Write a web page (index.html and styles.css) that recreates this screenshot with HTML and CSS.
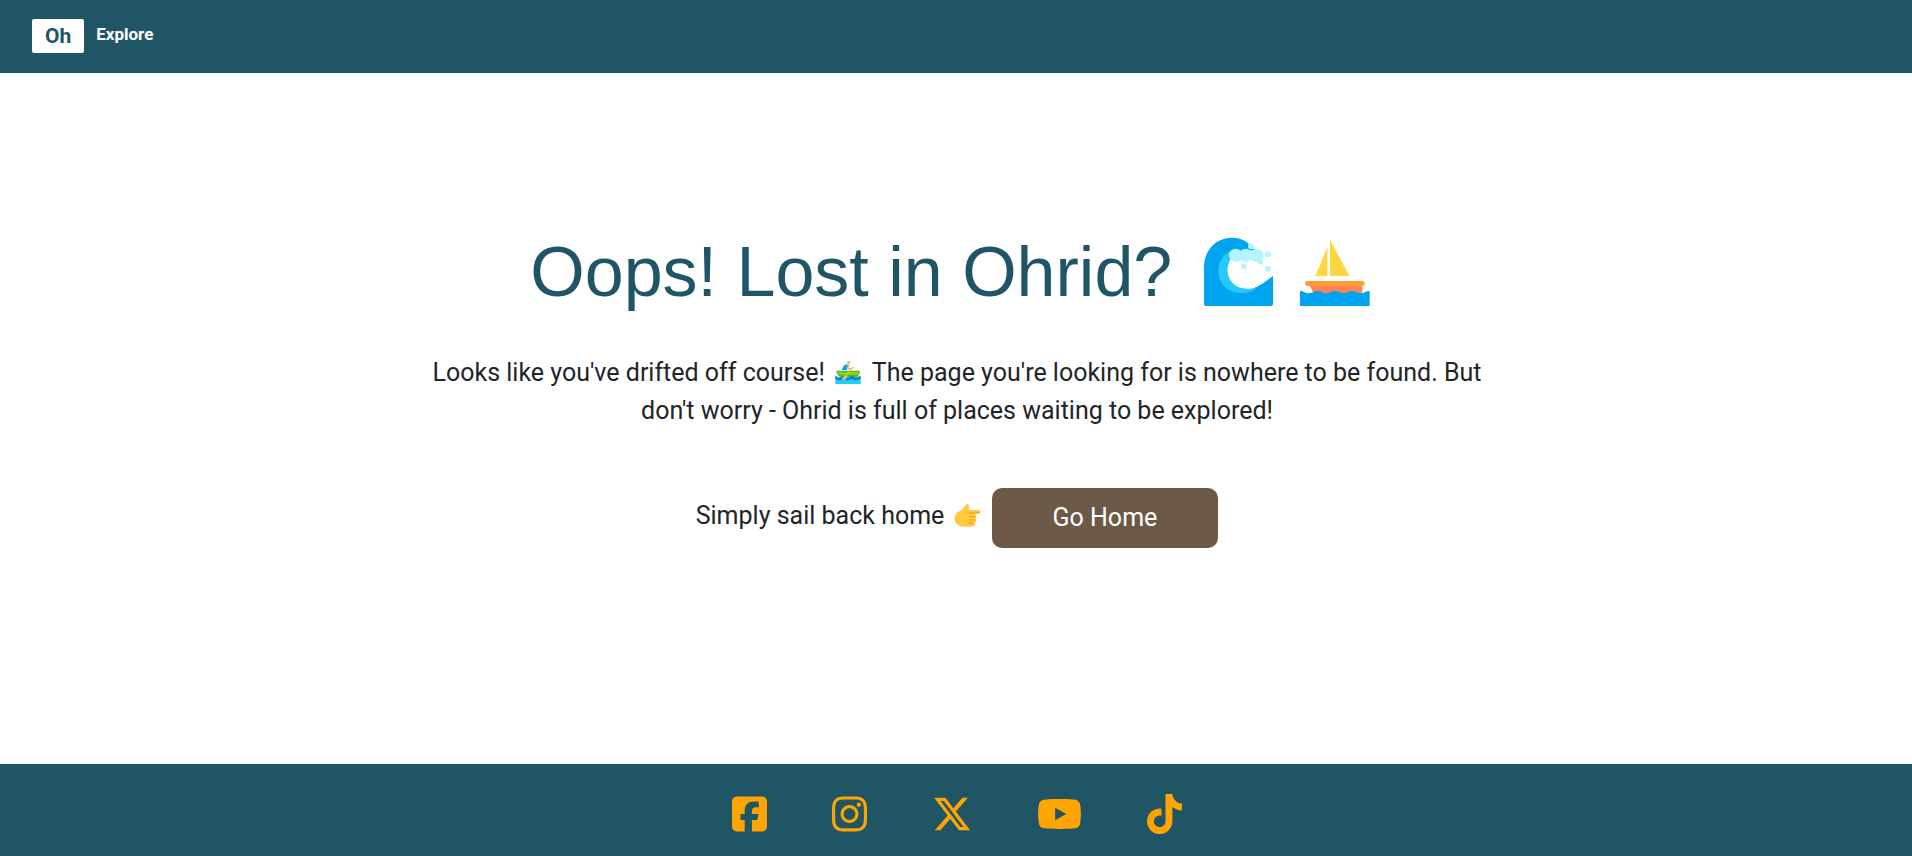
FILE: index.html
```html
<!DOCTYPE html>
<html lang="en">
<head>
<meta charset="utf-8">
<meta name="viewport" content="width=device-width, initial-scale=1">
<title>Oh Explore</title>
<link rel="stylesheet" href="styles.css">
</head>
<body>
<header class="header">
  <a class="brand" href="#"><span class="brand-badge">Oh</span><span class="brand-name">Explore</span></a>
</header>
<main class="main">
  <h1 class="title">Oops! Lost in Ohrid? <svg class="emoji-large" viewBox="39 48 288 216" role="img" aria-label="Wave">
      <path fill="#00a4ef" d="M75 252V143C75 88 112 53 160 53c28 0 48 12 66 36l-60 10c-25 8-40 28-40 56 0 35 25 58 62 58 40 0 60-26 94-46v85q0 6-6 6H81q-6 0-6-6z"/>
      <path fill="#26c9fc" d="M160 91c-26 9-42 32-42 61 0 39 30 67 69 67 24 0 40-9 54-19-14 5-24 6-37 6-35 0-58-24-58-55 0-11 3-22 9-31z"/>
      <path fill="#fff" d="M155 118c-6 9-9 20-9 32 0 32 24 55 57 55 36 0 53-18 79-38v-50z"/>
      <g fill="#b3f5ff"><circle cx="170" cy="106" r="20"/><circle cx="200" cy="106" r="20"/><circle cx="233" cy="106" r="20"/><path d="M170 93h63v27h-63z"/><circle cx="216" cy="79" r="9"/><circle cx="267" cy="103" r="9"/><circle cx="245" cy="125" r="8"/><circle cx="194" cy="140" r="9"/><circle cx="267" cy="146" r="9"/></g>
    </svg><svg class="emoji-large" viewBox="327 48 288 216" role="img" aria-label="Sailboat">
      <path fill="#ffd63e" d="M453 59l58 109h-58zM445 82v86h-36z"/>
      <path fill="#ff8257" d="M390 192h160v34H407z"/>
      <rect x="378" y="183" width="179" height="15" rx="7" fill="#ff9d2e"/>
      <path fill="#00a4ef" d="M363 213c13 0 14 7 25 7s17-7 28-7 16 7 27 7 14-7 25-7 16 7 26 7 15-7 26-7 16 7 26 7 14-7 26-7v45H363z"/>
    </svg></h1>
  <p class="message">Looks like you've drifted off course! <svg class="emoji" viewBox="35 30 105 75" role="img" aria-label="Rowboat">
      <path fill="#26c9fc" d="M48 82h76v20H48z"/>
      <path fill="#59b914" d="M51 62h71c-2 12-7 20-14 20H67c-8 0-14-8-16-20z"/>
      <path fill="#86d72f" d="M55 67h63l-3 7H59z"/>
      <path fill="#0084ce" d="M48 78c6 0 6 5 12 5s8-5 13-5 7 5 12 5 7-5 12-5 8 5 13 5 7-5 14-5v9c-7 0-8 4-14 4s-8-4-13-4-7 4-12 4-7-4-12-4-8 4-13 4-6-4-12-4z"/>
      <path fill="#00a4ef" d="M79 43l10 3-7 14H67c2-7 6-13 12-17z"/>
      <path d="M83 50l8 8 11-5" fill="none" stroke="#ffb04a" stroke-width="4" stroke-linecap="round"/>
      <circle cx="88" cy="38" r="5" fill="#ffb633"/>
      <path d="M79 79l18-23" fill="none" stroke="#e8c078" stroke-width="3"/>
      <path fill="#e8c078" d="M78 75l7 5-7 8-10 1 3-7z"/>
    </svg> The page you're looking for is nowhere to be found. But don't worry - Ohrid is full of places waiting to be explored!</p>
  <div class="home-row">
    <p class="home-text">Simply sail back home <svg class="emoji" viewBox="35 30 105 75" role="img" aria-label="Pointing right">
      <path fill="#ffc83d" d="M75 41l5-6q7-5 10 3l-3 13h32q5 1 5 5 0 5-5 5h-14q7 3 4 9 5 4 0 10 4 4-1 8-1 12-10 13H77C58 101 46 92 46 77c0-14 8-20 16-24 6-3 9-7 13-12z"/>
      <path d="M89 60h31M93 71h14M91 81h14M89 90h11" fill="none" stroke="#e39d19" stroke-width="3" stroke-linecap="round"/>
    </svg></p>
    <button class="home-button" type="button">Go Home</button>
  </div>
</main>
<footer class="footer">
  <a class="social" href="#" aria-label="Facebook"><svg viewBox="0 0 448 512"><path d="M64 32C28.7 32 0 60.7 0 96V416c0 35.3 28.7 64 64 64h98.2V334.2H109.4V256h52.8V222.3c0-87.1 39.4-127.5 125-127.5c16.2 0 44.2 3.2 55.7 6.4V172c-6-.6-16.5-1-29.6-1c-42 0-58.2 15.9-58.2 57.2V256h83.6l-14.4 78.2H255V480H384c35.3 0 64-28.7 64-64V96c0-35.3-28.7-64-64-64H64z"/></svg></a>
  <a class="social" href="#" aria-label="Instagram"><svg viewBox="0 0 448 512"><path d="M224.1 141c-63.6 0-114.9 51.3-114.9 114.9s51.3 114.9 114.9 114.9S339 319.5 339 255.9 287.7 141 224.1 141zm0 189.6c-41.1 0-74.7-33.5-74.7-74.7s33.5-74.7 74.7-74.7 74.7 33.5 74.7 74.7-33.6 74.7-74.7 74.7zm146.4-194.3c0 14.9-12 26.8-26.8 26.8-14.9 0-26.8-12-26.8-26.8s12-26.8 26.8-26.8 26.8 12 26.8 26.8zm76.1 27.2c-1.7-35.9-9.9-67.7-36.2-93.9-26.2-26.2-58-34.4-93.9-36.2-37-2.1-147.9-2.1-184.9 0-35.8 1.7-67.6 9.9-93.9 36.1s-34.4 58-36.2 93.9c-2.1 37-2.1 147.9 0 184.9 1.7 35.9 9.9 67.7 36.2 93.9s58 34.4 93.9 36.2c37 2.1 147.9 2.1 184.9 0 35.9-1.7 67.7-9.9 93.9-36.2 26.2-26.2 34.4-58 36.2-93.9 2.1-37 2.1-147.8 0-184.8zM398.8 388c-7.8 19.6-22.9 34.7-42.6 42.6-29.5 11.7-99.5 9-132.1 9s-102.7 2.6-132.1-9c-19.6-7.8-34.7-22.9-42.6-42.6-11.7-29.5-9-99.5-9-132.1s-2.6-102.7 9-132.1c7.8-19.6 22.9-34.7 42.6-42.6 29.5-11.7 99.5-9 132.1-9s102.7-2.6 132.1 9c19.6 7.8 34.7 22.9 42.6 42.6 11.7 29.5 9 99.5 9 132.1s2.7 102.7-9 132.1z"/></svg></a>
  <a class="social" href="#" aria-label="X"><svg viewBox="0 0 512 512"><path d="M389.2 48h70.6L305.6 224.2 487 464H345L233.7 318.6 106.5 464H35.8L200.7 275.5 26.8 48H172.4L272.9 180.9 389.2 48zM364.4 421.8h39.1L151.1 88h-42L364.4 421.8z"/></svg></a>
  <a class="social" href="#" aria-label="YouTube"><svg viewBox="0 0 576 512"><path d="M549.655 124.083c-6.281-23.65-24.787-42.276-48.284-48.597C458.781 64 288 64 288 64S117.22 64 74.629 75.486c-23.497 6.322-42.003 24.947-48.284 48.597-11.412 42.867-11.412 132.305-11.412 132.305s0 89.438 11.412 132.305c6.281 23.65 24.787 41.5 48.284 47.821C117.22 448 288 448 288 448s170.78 0 213.371-11.486c23.497-6.321 42.003-24.171 48.284-47.821 11.412-42.867 11.412-132.305 11.412-132.305s0-89.438-11.412-132.305zm-317.51 213.508V175.185l142.739 81.205-142.739 81.201z"/></svg></a>
  <a class="social" href="#" aria-label="TikTok"><svg viewBox="0 0 448 512"><path d="M448 209.9a210.1 210.1 0 0 1-122.8-39.3V349.4A162.6 162.6 0 1 1 185 188.3V278.2a74.6 74.6 0 1 0 52.2 71.2V0l88 0a121.2 121.2 0 0 0 1.9 22.2h0A122.2 122.2 0 0 0 381 102.4a121.4 121.4 0 0 0 67 20.1z"/></svg></a>
</footer>
</body>
</html>
```

FILE: styles.css
```css
* {
  box-sizing: border-box;
}

body {
  margin: 0;
  min-height: 100vh;
  display: flex;
  flex-direction: column;
  background: #fff;
  color: #212529;
  font-family: Roboto, sans-serif;
  font-size: 25px;
  line-height: 38px;
}

.header {
  display: flex;
  padding: 19px 32px 20px;
  background: #205566;
}

.brand {
  display: flex;
  align-items: flex-start;
  gap: 12px;
  color: #fff;
  font-weight: 700;
  text-decoration: none;
}

.brand-badge {
  padding: 0 13px;
  border-radius: 2px;
  background: #fff;
  color: #205566;
  font-size: 21px;
  line-height: 34px;
}

.brand-name {
  font-size: 17px;
  line-height: 30px;
}

.main {
  flex: 1;
  display: flex;
  flex-direction: column;
  align-items: center;
  justify-content: center;
  padding: 0 24px 60px 26px;
  text-align: center;
}

.title {
  margin: 0 0 40px;
  color: #205566;
  font-family: "Liberation Sans", Arial, sans-serif;
  font-size: 70px;
  font-weight: 400;
  line-height: 84px;
}

.emoji-large {
  width: 96px;
  height: 72px;
  vertical-align: -12px;
}

.emoji {
  width: 35px;
  height: 25px;
  vertical-align: -4px;
}

.message {
  max-width: 1100px;
  margin: 0 0 58px;
}

.home-row {
  display: flex;
  align-items: center;
  gap: 6px;
}

.home-text {
  margin: 0;
  padding-bottom: 4px;
}

.home-button {
  padding: 11px 61px;
  border: 0;
  border-radius: 10px;
  background: #6d5948;
  color: #fff;
  font: inherit;
  cursor: pointer;
}

.footer {
  display: flex;
  flex-wrap: wrap;
  justify-content: center;
  gap: 65px;
  padding: 30px 24px 22px 26px;
  background: #205566;
}

.social {
  display: flex;
  color: #ffa500;
}

.social svg {
  height: 40px;
  fill: currentColor;
}
```
